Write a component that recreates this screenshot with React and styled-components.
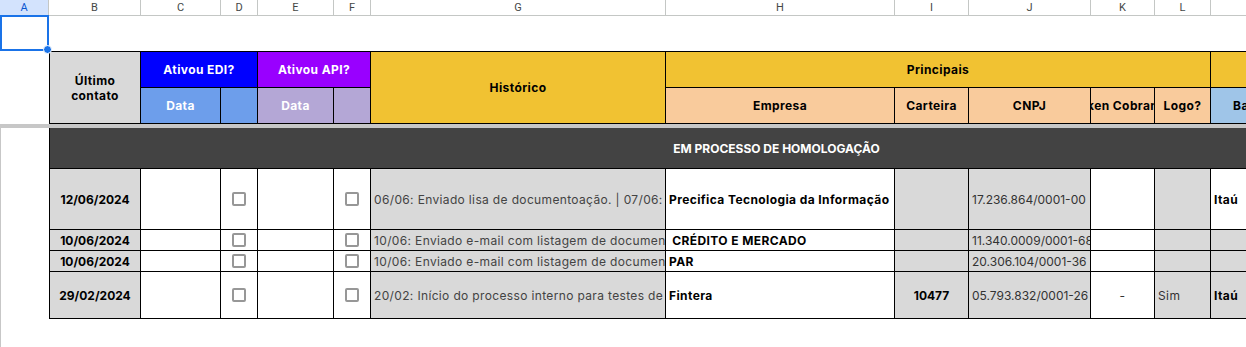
import React from "react";
import styled, { createGlobalStyle } from "styled-components";

const GlobalStyle = createGlobalStyle`
  * { box-sizing: border-box; }
  html, body { margin: 0; padding: 0; background: #fff; overflow: hidden; }
  body { font-family: Inter, "Open Sans", sans-serif; }
`;

const COLS =
  "49px 92px 80px 37px 76px 37px 295px 229px 74px 122px 64px 56px 84px 209px";
const LETTERS = ["A", "B", "C", "D", "E", "F", "G", "H", "I", "J", "K", "L", "M", "N"];

const Sheet = styled.div`
  width: 1246px;
  height: 100vh;
  display: flex;
  flex-direction: column;
  overflow: hidden;
`;

const LetterBar = styled.div`
  display: grid;
  grid-template-columns: ${COLS};
  height: 16px;
  border-bottom: 1px solid #c4c7c5;
  flex-shrink: 0;
`;

const Letter = styled.div`
  display: flex;
  align-items: center;
  justify-content: center;
  border-right: 1px solid #c4c7c5;
  font-family: Roboto, "Liberation Sans", sans-serif;
  font-size: 11px;
  color: ${(p) => (p.$active ? "#0b57d0" : "#444746")};
  background: ${(p) => (p.$active ? "#d3e3fd" : "#fff")};
`;

const Grid = styled.div`
  display: grid;
  grid-template-columns: ${COLS};
  grid-template-rows: ${(p) => p.$rows};
  flex-shrink: 0;
`;

const FreezeBar = styled.div`
  height: 4px;
  background: #c7c7c7;
  flex-shrink: 0;
`;

const ScrollArea = styled.div`
  flex: 1;
  box-shadow: inset 1px 0 #c7c7c7;
`;

const Blank = styled.div`
  grid-column: ${(p) => p.$col || "auto"};
  grid-row: ${(p) => p.$row || "auto"};
  position: relative;
`;

const Selection = styled.div`
  position: absolute;
  top: -1px;
  left: 0;
  right: 0;
  bottom: 0;
  border: 2px solid #1a73e8;
`;

const Handle = styled.div`
  position: absolute;
  right: -5px;
  bottom: -5px;
  width: 9px;
  height: 9px;
  border-radius: 50%;
  background: #1a73e8;
  border: 1px solid #fff;
`;

const Cell = styled.div`
  grid-column: ${(p) => p.$col || "auto"};
  grid-row: ${(p) => p.$row || "auto"};
  display: flex;
  align-items: center;
  justify-content: ${(p) => (p.$left ? "flex-start" : "center")};
  padding: ${(p) => (p.$left ? "0 3px" : "0")};
  overflow: hidden;
  white-space: nowrap;
  background: ${(p) => p.$bg || "#fff"};
  color: ${(p) => p.$color || "#000"};
  font-size: 12px;
  letter-spacing: ${(p) => (p.$num ? "0" : "0.4px")};
  font-weight: ${(p) => (p.$bold ? 700 : 400)};
  border-right: 1px solid #000;
  border-bottom: 1px solid #000;
  border-left: ${(p) => (p.$first ? "1px solid #000" : "0")};
  border-top: ${(p) => (p.$top ? "1px solid #000" : "0")};
`;

const HeaderCell = styled(Cell)`
  text-align: center;
  line-height: 15px;
  white-space: ${(p) => (p.$wrap ? "normal" : "nowrap")};
`;

const BandCell = styled(Cell)`
  background: #434343;
  color: #fff;
  font-weight: 700;
  letter-spacing: 0;
`;

const HistText = styled(Cell)`
  color: #434343;
  letter-spacing: 0.35px;
`;

const Box = styled.span`
  width: 14px;
  height: 14px;
  border: 2px solid #979797;
  border-radius: 2px;
  background: #fff;
`;

const GRAY = "#d9d9d9";

const rows = [
  {
    h: 61,
    date: "12/06/2024",
    hist: "06/06: Enviado lisa de documentoação. | 07/06: Cliente enviou a documentação solicitada",
    empresa: "Precifica Tecnologia da Informação",
    carteira: "",
    cnpj: "17.236.864/0001-00",
    token: "",
    logo: "",
    banco: "Itaú",
    bancoBg: "#fff",
  },
  {
    h: 21,
    date: "10/06/2024",
    hist: "10/06: Enviado e-mail com listagem de documentos necessários",
    empresa: "\u00a0CRÉDITO E MERCADO",
    carteira: "",
    cnpj: "11.340.0009/0001-68",
    token: "",
    logo: "",
    banco: "",
    bancoBg: GRAY,
  },
  {
    h: 21,
    date: "10/06/2024",
    hist: "10/06: Enviado e-mail com listagem de documentos necessários",
    empresa: "PAR",
    carteira: "",
    cnpj: "20.306.104/0001-36",
    token: "",
    logo: "",
    banco: "",
    bancoBg: GRAY,
  },
  {
    h: 47,
    date: "29/02/2024",
    hist: "20/02: Início do processo interno para testes de boleto registrado",
    empresa: "Fintera",
    carteira: "10477",
    cnpj: "05.793.832/0001-26",
    token: "-",
    logo: "Sim",
    banco: "Itaú",
    bancoBg: GRAY,
  },
];

function DataRow({ r }) {
  return (
    <>
      <Blank $col="1" />
      <Cell $first $bold $num $bg={GRAY}>
        {r.date}
      </Cell>
      <Cell />
      <Cell>
        <Box />
      </Cell>
      <Cell />
      <Cell>
        <Box />
      </Cell>
      <HistText $left $bg={GRAY}>
        {r.hist}
      </HistText>
      <Cell $left $bold>
        {r.empresa}
      </Cell>
      <Cell $bold $num $bg={GRAY}>
        {r.carteira}
      </Cell>
      <Cell $left $num $bg={GRAY} $color="#333">
        {r.cnpj}
      </Cell>
      <Cell $color="#333">{r.token}</Cell>
      <Cell $left $bg={GRAY} $color="#333">
        {r.logo}
      </Cell>
      <Cell $left $bold $bg={r.bancoBg}>
        {r.banco}
      </Cell>
      <Blank $col="14" />
    </>
  );
}

export default function App() {
  return (
    <Sheet>
      <GlobalStyle />
      <LetterBar>
        {LETTERS.map((l, i) => (
          <Letter key={l} $active={i === 0}>
            {l}
          </Letter>
        ))}
      </LetterBar>

      <Grid $rows="35px 37px 36px">
        <Blank $col="1" $row="1">
          <Selection>
            <Handle />
          </Selection>
        </Blank>
        <Blank $col="1" $row="2 / span 2" />

        <HeaderCell $col="2" $row="2 / span 2" $first $top $bold $wrap $bg={GRAY}>
          Último
          <br />
          contato
        </HeaderCell>
        <HeaderCell $col="3 / span 2" $row="2" $top $bold $bg="#0000ff" $color="#fff">
          Ativou EDI?
        </HeaderCell>
        <HeaderCell $col="5 / span 2" $row="2" $top $bold $bg="#9900ff" $color="#fff">
          Ativou API?
        </HeaderCell>
        <HeaderCell $col="7" $row="2 / span 2" $top $bold $bg="#f1c232">
          Histórico
        </HeaderCell>
        <HeaderCell $col="8 / span 5" $row="2" $top $bold $bg="#f1c232">
          Principais
        </HeaderCell>
        <HeaderCell $col="13 / span 2" $row="2" $top $bg="#f1c232" />

        <HeaderCell $col="3" $row="3" $bold $bg="#6d9eeb" $color="#fff">
          Data
        </HeaderCell>
        <HeaderCell $col="4" $row="3" $bg="#6d9eeb" />
        <HeaderCell $col="5" $row="3" $bold $bg="#b4a7d6" $color="#fff">
          Data
        </HeaderCell>
        <HeaderCell $col="6" $row="3" $bg="#b4a7d6" />
        <HeaderCell $col="8" $row="3" $bold $bg="#f9cb9c">
          Empresa
        </HeaderCell>
        <HeaderCell $col="9" $row="3" $bold $bg="#f9cb9c">
          Carteira
        </HeaderCell>
        <HeaderCell $col="10" $row="3" $bold $bg="#f9cb9c">
          CNPJ
        </HeaderCell>
        <HeaderCell $col="11" $row="3" $bold $bg="#f9cb9c">
          Token Cobrança
        </HeaderCell>
        <HeaderCell $col="12" $row="3" $bold $bg="#f9cb9c">
          Logo?
        </HeaderCell>
        <HeaderCell $col="13" $row="3" $bold $bg="#9fc5e8">
          Banco
        </HeaderCell>
        <HeaderCell $col="14" $row="3" $bg="#9fc5e8" />
      </Grid>

      <FreezeBar />

      <ScrollArea>
        <Grid $rows={["41px", ...rows.map((r) => `${r.h}px`)].join(" ")}>
          <Blank $col="1" $row="1" />
          <BandCell $col="2 / -1" $row="1" $first>
            EM PROCESSO DE HOMOLOGAÇÃO
          </BandCell>
          {rows.map((r, i) => (
            <DataRow key={i} r={r} />
          ))}
        </Grid>
      </ScrollArea>
    </Sheet>
  );
}
